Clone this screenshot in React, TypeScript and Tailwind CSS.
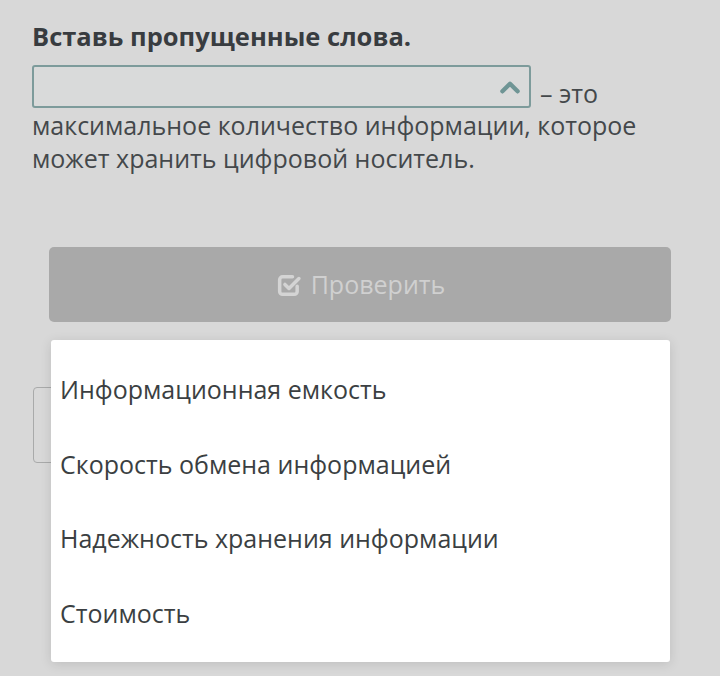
import { useState } from 'react'

const options = [
  'Информационная емкость',
  'Скорость обмена информацией',
  'Надежность хранения информации',
  'Стоимость',
]

function ChevronUp() {
  return (
    <svg className="w-[26px] h-[26px]" viewBox="0 0 24 24" fill="none" stroke="#6f9595" strokeWidth={4} strokeLinecap="round" strokeLinejoin="round">
      <path d="M5 16l7-7 7 7" />
    </svg>
  )
}

function CheckSquare() {
  return (
    <svg className="w-[28px] h-[28px]" viewBox="0 0 24 24" fill="none" stroke="#d4d4d4" strokeWidth={3} strokeLinecap="round" strokeLinejoin="round">
      <path d="M19 13v4.5a2.5 2.5 0 0 1-2.5 2.5h-10A2.5 2.5 0 0 1 4 17.5v-10A2.5 2.5 0 0 1 6.5 5H15" />
      <path d="M8.5 11.5l3.5 3.5 8.5-8.5" />
    </svg>
  )
}

export default function App() {
  const [selected] = useState<string | null>(null)

  return (
    <div
      className="relative w-[720px] h-[676px] overflow-hidden bg-[#d8d8d8] text-[#3b3f42]"
      style={{ fontFamily: '"Open Sans", "Noto Sans", sans-serif' }}
    >
      <div className="px-[32px] pt-[18px]">
        <h2 className="text-[25.5px] font-bold leading-[36px] text-[#383c40]">Вставь пропущенные слова.</h2>

        <div className="mt-[11px] text-[25px] leading-[33px] text-[#44484b]">
          <div className="flex items-end gap-[9px]">
            <div className="w-[499px] h-[43px] border-2 border-[#7d9b9b] rounded-[3px] bg-[#d9dada] flex items-center justify-end pr-[6px]">
              {selected}
              <ChevronUp />
            </div>
            <span className="leading-[30px]">– это</span>
          </div>
          <p className="mt-[1px]">максимальное количество информации, которое может хранить цифровой носитель.</p>
        </div>
      </div>

      <div className="px-[49px] mt-[72px]">
        <button className="w-[622px] h-[75px] rounded-[5px] bg-[#a9a9a9] flex items-center justify-center gap-[8px] text-[25px] text-[#d0d0d0]">
          <CheckSquare />
          <span>Проверить</span>
        </button>
      </div>

      <div className="ml-[33px] mt-[65px] w-[300px] h-[76px] border border-[#a9aaaa] rounded-[4px]" />

      <div className="absolute left-[51px] top-[340px] w-[619px] h-[322px] bg-white rounded-[3px] shadow-[0_2px_12px_rgba(0,0,0,0.12)] pt-[27px]">
        {options.map((o) => (
          <div key={o} className="h-[74.5px] pl-[9px] flex items-start text-[25px] leading-[44px] text-[#3b3f42]">
            {o}
          </div>
        ))}
      </div>
    </div>
  )
}
